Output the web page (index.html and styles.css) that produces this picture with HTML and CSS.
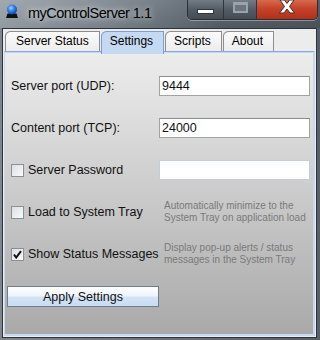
FILE: index.html
```html
<!DOCTYPE html>
<html lang="en">
<head>
  <meta charset="UTF-8" />
  <title>myControlServer 1.1</title>
  <link rel="stylesheet" href="styles.css">
</head>
<body>
  <div class="window">
    <div class="titlebar">
      <svg class="app-icon" width="14" height="16" viewBox="0 0 14 16">
        <defs>
          <radialGradient id="ball" cx="0.4" cy="0.35" r="0.7">
            <stop offset="0" stop-color="#9fd2ff" />
            <stop offset="0.45" stop-color="#2f86f0" />
            <stop offset="1" stop-color="#0b3aa8" />
          </radialGradient>
        </defs>
        <path d="M1 15 L2.5 10.5 L11.5 10.5 L13 15 Z" fill="#111" />
        <circle cx="7" cy="6.5" r="5" fill="url(#ball)" />
      </svg>
      <span class="title">myControlServer 1.1</span>
      <div class="caption">
        <span class="cap-btn min"><i></i></span>
        <span class="cap-btn max"><i></i></span>
        <span class="cap-btn close">
          <svg width="18" height="14" viewBox="0 0 18 14">
            <path d="M2 0 L6.5 0 L9 3.5 L11.5 0 L16 0 L11.5 6.5 L16.5 13 L12 13 L9 9 L6 13 L1.5 13 L6.5 6.5 Z" fill="#fff" stroke="#4a2a24" stroke-width="1" />
          </svg>
        </span>
      </div>
    </div>

    <div class="client">
      <div class="tabs">
        <div class="tab first">Server Status</div>
        <div class="tab active">Settings</div>
        <div class="tab">Scripts</div>
        <div class="tab">About</div>
      </div>

      <div class="panel">
        <div class="form">
          <label class="label">Server port (UDP):</label>
          <input class="field" type="text" value="9444">

          <label class="label">Content port (TCP):</label>
          <input class="field" type="text" value="24000">

          <label class="label"><span class="check"></span>Server Password</label>
          <input class="field off" type="password" value="">

          <label class="label"><span class="check"></span>Load to System Tray</label>
          <div class="hint">Automatically minimize to the<br>System Tray on application load</div>

          <label class="label">
            <span class="check">
              <svg width="9" height="9" viewBox="0 0 9 9"><path d="M1 4.5 L3.2 7.5 L8 1.2" fill="none" stroke="#111" stroke-width="2" /></svg>
            </span>Show Status Messages
          </label>
          <div class="hint">Display pop-up alerts / status<br>messages in the System Tray</div>
        </div>
        <button class="apply">Apply Settings</button>
      </div>
    </div>
  </div>
</body>
</html>
```

FILE: styles.css
```css
body {
  margin: 0;
  background: #6c747c;
  font-family: "Liberation Sans", Arial, sans-serif;
}
.window {
  width: 320px;
  height: 340px;
  background: linear-gradient(to right, #7d858e, #58616a);
  overflow: hidden;
}

/* title bar */
.titlebar {
  height: 28px;
  display: flex;
  align-items: flex-start;
  background:
    linear-gradient(to bottom, rgba(255,255,255,0.08), rgba(0,0,0,0.05)),
    linear-gradient(to right, #9aa2aa 0%, #7c858e 35%, #545d66 70%, #4c555e 100%);
}
.app-icon {
  margin: 3px 0 0 5px;
}
.title {
  margin: 5px 0 0 9px;
  font-size: 14.5px;
  line-height: 17px;
  letter-spacing: -0.5px;
  color: #000;
  text-shadow: 0 0 6px rgba(255,255,255,0.7), 0 0 12px rgba(255,255,255,0.4);
}
.caption {
  margin-left: auto;
  margin-right: 2px;
  display: flex;
  height: 19px;
  border: 1px solid #2a2f35;
  border-top: none;
  border-radius: 0 0 5px 5px;
  overflow: hidden;
  box-shadow: 0 1px 0 rgba(255,255,255,0.35);
}
.cap-btn {
  display: flex;
  align-items: center;
  justify-content: center;
  height: 19px;
}
.min, .max {
  background: linear-gradient(to bottom, #737c85, #535c65 50%, #434b53);
  border-right: 1px solid #2f353b;
}
.min { width: 35px; }
.max { width: 32px; }
.min i {
  width: 15px;
  height: 3px;
  margin-top: 4px;
  background: #fff;
  border: 1px solid #30363c;
}
.max i {
  width: 11px;
  height: 6px;
  margin-top: -4px;
  border: 2px solid #9ba2a9;
  border-top-width: 3px;
  background: #6c757e;
}
.close {
  width: 60px;
  align-items: flex-start;
  background: linear-gradient(to bottom, #d66a4f, #c4432a 45%, #b2301a);
}

/* client area */
.client {
  height: 307px;
  margin: 0 3px 0 2px;
  padding: 0 1px 1px 1px;
  border: 1px solid #2d3339;
  background: #ececec;
  display: flex;
  flex-direction: column;
}
.tabs {
  display: flex;
  height: 20px;
  margin-top: 2px;
  padding-left: 1px;
  gap: 1px;
}
.tab {
  position: relative;
  padding: 0 10px 0 8px;
  font-size: 12px;
  line-height: 19px;
  color: #000;
  background: linear-gradient(to bottom, #fbfbfb, #ececec);
  border: 1px solid #8e8e8e;
  border-bottom: none;
  border-top-left-radius: 6px 5px;
}
.tab.first { padding-left: 10px; }
.tab.active {
  background: #c5daf2;
  border-color: #7c9ed2;
  height: 22px;
  z-index: 1;
}

.panel {
  flex: 1;
  display: flex;
  flex-direction: column;
  padding: 13px 0 0 2px;
  border-style: solid;
  border-width: 1px 2px 2px 1px;
  border-color: #86a8dc #c5d8ef #c5d8ef #c5d8ef;
  box-shadow: inset 0 1px 0 #c5d8ef;
  background: linear-gradient(to bottom, #ededed, #a9a9a9);
}
.form {
  display: grid;
  grid-template-columns: 148px 151px;
  grid-auto-rows: 42px;
  align-items: center;
  padding-left: 4px;
}
.label {
  display: flex;
  align-items: center;
  font-size: 12.5px;
  color: #111;
}
.check {
  display: flex;
  align-items: center;
  justify-content: center;
  width: 11px;
  height: 11px;
  margin-right: 4px;
  border: 1px solid #8a9099;
  background: linear-gradient(to bottom right, #dcdfe3, #fafafa);
}
.field {
  box-sizing: border-box;
  width: 151px;
  height: 20px;
  margin: 0;
  padding: 0 2px;
  border: 1px solid #a3a3a3;
  border-top-color: #8c8c8c;
  background: #fff;
  font-family: "Liberation Sans", Arial, sans-serif;
  font-size: 12.5px;
  color: #111;
  outline: none;
}
.field.off {
  border-color: #c4cedb;
}
.hint {
  margin-left: 5px;
  font-size: 10px;
  line-height: 12px;
  color: #7a7a7a;
}
.apply {
  width: 152px;
  height: 21px;
  margin: 11px 0 0 0;
  padding: 0;
  border: 1px solid #6f7d8c;
  background: linear-gradient(to bottom, #ffffff, #eef4fb 45%, #d3e3f5 55%, #c8dbf1);
  font-family: "Liberation Sans", Arial, sans-serif;
  font-size: 12.5px;
  color: #111;
}
```
